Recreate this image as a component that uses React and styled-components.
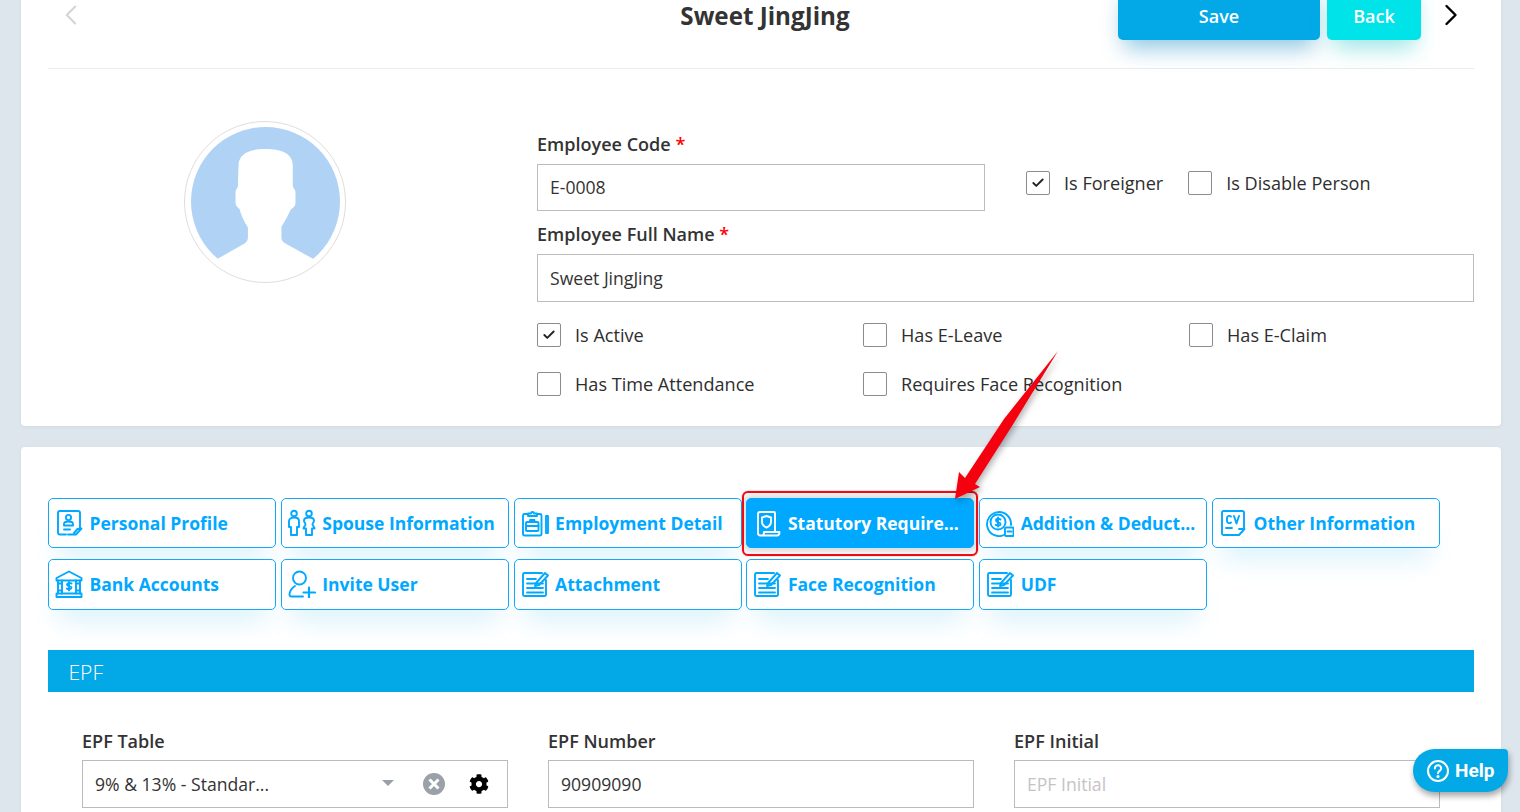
import React from "react";
import styled, { createGlobalStyle } from "styled-components";
import { Check, ChevronLeft, ChevronRight } from "lucide-react";
import { FaCog } from "react-icons/fa";

const Global = createGlobalStyle`
  html, body { margin: 0; padding: 0; height: 812px; overflow: hidden; background: #dde5ed; }
  body { font-family: "Open Sans", "Liberation Sans", sans-serif; color: #333; }
  * { box-sizing: border-box; }
`;

const Page = styled.div`
  width: 1520px;
  height: 812px;
  overflow: hidden;
  position: relative;
`;
const Content = styled.div`
  margin-top: -20px;
  padding: 0 19px 0 21px;
  display: flex;
  flex-direction: column;
  gap: 21px;
`;
const Card = styled.section`
  background: #fff;
  border-radius: 4px;
  box-shadow: 0 1px 3px rgba(120, 140, 160, 0.12);
  padding: 0 27px;
`;
const TopCard = styled(Card)`
  height: 446px;
`;
const Header = styled.header`
  display: flex;
  align-items: flex-start;
  height: 88.5px;
  border-bottom: 1px solid #ececec;
`;
const HeaderLeft = styled.div`
  width: 364px;
  padding: 18px 0 0 6px;
  color: #d2d4d6;
  display: flex;
`;
const Title = styled.h1`
  flex: 0 0 706px;
  margin: 0;
  padding-top: 18px;
  text-align: center;
  font-size: 24.2px;
  line-height: 36px;
  font-weight: 700;
  color: #333;
`;
const ActionBtn = styled.button`
  height: 60px;
  width: ${(p) => p.$w}px;
  margin-right: ${(p) => p.$mr}px;
  padding: 11px 0 0;
  border: 0;
  border-radius: 5px;
  background: ${(p) => p.$bg};
  color: #fff;
  font: 600 18px/30px "Open Sans", sans-serif;
  box-shadow: 0 14px 22px -6px ${(p) => p.$sh};
`;
const NextBtn = styled.div`
  padding: 17px 0 0 12px;
  color: #000;
  display: flex;
`;
const Profile = styled.div`
  display: flex;
  padding-top: 52px;
`;
const AvatarCol = styled.div`
  flex: 0 0 489px;
  padding-left: 136px;
`;
const AvatarFrame = styled.div`
  width: 162px;
  height: 162px;
  border: 1px solid #dedede;
  border-radius: 50%;
  display: flex;
  align-items: center;
  justify-content: center;
`;
const FormCol = styled.div`
  flex: 1;
  display: flex;
  flex-direction: column;
  padding-top: 9px;
`;
const Label = styled.label`
  display: block;
  font-size: 18.05px;
  line-height: 28px;
  font-weight: 600;
  color: #333;
  margin-bottom: 6px;
`;
const Req = styled.span`
  color: #f00;
`;
const Input = styled.div`
  height: ${(p) => p.$h || 47}px;
  width: ${(p) => (p.$w ? `${p.$w}px` : "100%")};
  border: 1px solid #bcbcbc;
  background: #fff;
  padding: 0 12px;
  display: flex;
  align-items: center;
  font-size: 17.6px;
  color: ${(p) => (p.$placeholder ? "#c4c4c4" : "#333")};
`;
const CodeRow = styled.div`
  display: flex;
  align-items: flex-start;
  margin-bottom: 9px;
`;
const InlineChecks = styled.div`
  display: flex;
  gap: 25px;
  margin: 7px 0 0 41px;
`;
const CheckItem = styled.div`
  display: flex;
  align-items: center;
  gap: 14px;
  font-size: 18.1px;
  line-height: 24px;
  color: #2e2e2e;
  white-space: nowrap;
`;
const Box = styled.span`
  flex: none;
  width: 24px;
  height: 24px;
  border: 1px solid #8c8c8c;
  border-radius: 2px;
  display: flex;
  align-items: center;
  justify-content: center;
  color: #222;
`;
const CheckGrid = styled.div`
  display: grid;
  grid-template-columns: 326px 326px 1fr;
  row-gap: 25px;
  margin-top: 21px;
`;

const BottomCard = styled(Card)`
  padding-top: 51px;
  height: 420px;
`;
const Tabs = styled.div`
  display: grid;
  grid-template-columns: repeat(6, 228px);
  column-gap: 4.8px;
  grid-template-rows: 50px 51px;
  row-gap: 11px;
`;
const Tab = styled.div`
  position: relative;
  display: flex;
  align-items: center;
  gap: 6.5px;
  padding: 0 10px 1px 6px;
  border: 1px solid ${(p) => (p.$active ? "#00a8ff" : "#17a8f5")};
  border-radius: 5px;
  background: ${(p) => (p.$active ? "#00a8ff" : "#fff")};
  color: ${(p) => (p.$active ? "#fff" : "#00a8ff")};
  font-size: 17.5px;
  font-weight: 700;
  box-shadow: ${(p) =>
    p.$active ? "0 0 5px 4px rgba(0,0,0,.13)" : "0 22px 26px -10px rgba(0,168,240,.14)"};
`;
const TabLabel = styled.span`
  overflow: hidden;
  white-space: nowrap;
  text-overflow: ellipsis;
`;
const Highlight = styled.span`
  position: absolute;
  inset: -8px -5px -9px -5px;
  border: 2px solid #ee0b14;
  border-radius: 6px;
  box-shadow: 0 0 1px #ee0b14;
  pointer-events: none;
`;
const IconSvg = styled.svg`
  flex: none;
  width: 28px;
  height: 28px;
  fill: none;
  stroke: currentColor;
  stroke-width: 1.9;
  stroke-linecap: round;
  stroke-linejoin: round;
`;
const Band = styled.div`
  margin-top: 40px;
  height: 42px;
  background: #03a9e7;
  color: #fff;
  padding-left: 20.5px;
  font-size: 21px;
  font-weight: 300;
  line-height: 44px;
`;
const Fields = styled.div`
  display: grid;
  grid-template-columns: repeat(3, 426px);
  column-gap: 40px;
  padding: 35px 0 0 34px;
`;
const FieldLabel = styled(Label)`
  margin-bottom: 5px;
`;
const SelectValue = styled.span`
  flex: 1;
`;
const Caret = styled.span`
  width: 0;
  height: 0;
  border-left: 6px solid transparent;
  border-right: 6px solid transparent;
  border-top: 6px solid #9aa0a6;
  margin-right: 29px;
  margin-top: -3px;
`;
const ClearBtn = styled.svg`
  width: 22px;
  height: 22px;
  margin-right: 24px;
`;
const Gear = styled(FaCog)`
  width: 20px;
  height: 20px;
  color: #000;
  margin-right: 6px;
`;
const Help = styled.div`
  position: absolute;
  left: 1413px;
  top: 749px;
  width: 95px;
  height: 43px;
  border-radius: 22px 4px 22px 22px;
  background: #03a9e7;
  color: #fff;
  display: flex;
  align-items: center;
  gap: 5px;
  padding-left: 13px;
  font: 700 19px "Roboto", sans-serif;
  box-shadow: 1px 4px 6px rgba(0, 0, 0, 0.35);
`;
const Arrow = styled.svg`
  position: absolute;
  left: 940px;
  top: 340px;
  width: 130px;
  height: 170px;
  pointer-events: none;
  filter: drop-shadow(2px 3px 3px rgba(0, 0, 0, 0.3));
`;

const I = {
  profile: (
    <>
      <path d="M11 25.500H5a2 2 0 0 1-2-2V4a2 2 0 0 1 2-2h18a2 2 0 0 1 2 2v16" />
      <circle cx="13.500" cy="8.500" r="2.600" />
      <path d="M9 16.500V15c0-1.500 1.500-2.500 4.500-2.500s4.500 1 4.500 2.500v1.500z" />
      <path d="M9 20.500h6M13 25.500h8l5.500-6-4 .5-3.500 4" />
    </>
  ),
  spouse: (
    <>
      <circle cx="6" cy="4.500" r="2.800" />
      <circle cx="21" cy="4.500" r="2.800" />
      <path d="M1 12c0-2 2-3.500 5-3.500s5 1.500 5 3.500v6H9v8H3v-8H1z" />
      <path d="M16 11.500c0-2 2-3 5-3s5 1 5 3c0 2-1.500 2.500-1.500 4s2 2 2 4h-2.500v6.500h-6V19.500h-2.500c0-2 2-2.500 2-4s-1.500-2-1.500-4z" />
    </>
  ),
  employ: (
    <>
      <path d="M6 5H3.500a1.500 1.500 0 0 0-1.500 1.500V25a1.500 1.500 0 0 0 1.500 1.500H19a1.500 1.500 0 0 0 1.500-1.500V6.500A1.500 1.500 0 0 0 19 5h-2.500" />
      <path d="M7 7V4.500h3a1.500 1.500 0 0 1 3 0h3V7z" />
      <rect x="5" y="13" width="12.500" height="9" rx="1" />
      <path d="M9 13v-2h4.500v2M5 17h12.500" />
      <path d="M25 7h2v17h-2z" />
    </>
  ),
  statutory: (
    <>
      <path d="M5 24V5a2 2 0 0 1 2-2h14a1 1 0 0 1 1 1v18" />
      <path d="M13.500 7l4.500 1.500v4c0 3-2 5-4.500 6-2.500-1-4.500-3-4.500-6v-4z" />
      <path d="M5 24c0 1.500 1 2.500 2.500 2.500H24c1.500 0 2.500-1 2.500-3.500H11c0 2-.5 3.500-2 3.500" />
    </>
  ),
  addition: (
    <>
      <circle cx="12" cy="13" r="7.500" />
      <path d="M18 26a12 12 0 1 1 7-10" />
      <path d="M14.500 10.500c-1-1-4.500-1.200-4.500 1 0 2.500 4.500 1.200 4.500 3.500 0 2-3.500 2-4.800.8M12 8.500v9" />
      <rect x="19" y="18.500" width="8.500" height="8.500" rx="1" />
      <path d="M21.500 22.500h4" />
    </>
  ),
  cv: (
    <>
      <path d="M13 26H4.500A1.500 1.500 0 0 1 3 24.500v-21A1.500 1.500 0 0 1 4.500 2h19A1.500 1.500 0 0 1 25 3.500V20" />
      <path d="M12 7.500c-1-1-4-1-4 1.500v3c0 2.500 3 2.500 4 1.500M15 7l2.500 7.500L20 7" />
      <path d="M7 19h6M13 26h7l5.500-6H20" />
    </>
  ),
  bank: (
    <>
      <path d="M14 1.500L1.500 8v2.500h25V8z" />
      <path d="M3 10.500v13M7 10.500v13M21 10.500v13M25 10.500v13M3 13.500h4M21 13.500h4M3 20.500h4M21 20.500h4" />
      <path d="M1.500 27v-3.500h25V27z" />
      <path d="M16.500 13.500c-1-1-4.500-1-4.500 1 0 2.200 4.500 1 4.500 3 0 2-3.500 2-4.700 1M14 12v8.500" />
    </>
  ),
  invite: (
    <>
      <circle cx="11.500" cy="8" r="6.500" />
      <path d="M15 26.500H3.500c-1.500 0-2.200-1-2-2.500.5-3.500 3-6.500 5.500-8" />
      <path d="M21 17.500V27.500M15.500 22.500H27" strokeWidth="2.200" />
    </>
  ),
  form: (
    <>
      <path d="M25 10v14.500a1.500 1.500 0 0 1-1.500 1.500h-20A1.500 1.500 0 0 1 2 24.500v-20A1.500 1.500 0 0 1 3.500 3H21" />
      <path d="M6 9h9M6 13.500h16M6 18h16M6 22.500h16" strokeWidth="1.800" />
      <path d="M15 13l9-10 3 2.500-9 9.500-4 1z" />
    </>
  ),
};

const tabs = [
  ["profile", "Personal Profile"],
  ["spouse", "Spouse Information"],
  ["employ", "Employment Detail"],
  ["statutory", "Statutory Requirements", true],
  ["addition", "Addition & Deductions"],
  ["cv", "Other Information"],
  ["bank", "Bank Accounts"],
  ["invite", "Invite User"],
  ["form", "Attachment"],
  ["form", "Face Recognition"],
  ["form", "UDF"],
];

const Checkbox = ({ on, children }) => (
  <CheckItem>
    <Box>{on && <Check size={14} strokeWidth={3.2} />}</Box>
    {children}
  </CheckItem>
);

export default function App() {
  return (
    <Page>
      <Global />
      <Content>
        <TopCard>
          <Header>
            <HeaderLeft>
              <ChevronLeft size={34} strokeWidth={1.4} />
            </HeaderLeft>
            <Title>Sweet JingJing</Title>
            <ActionBtn $w={202} $mr={7} $bg="#03a9e7" $sh="rgba(3,130,190,.45)">
              Save
            </ActionBtn>
            <ActionBtn $w={94} $mr={0} $bg="#00e3e8" $sh="rgba(0,190,190,.4)">
              Back
            </ActionBtn>
            <NextBtn>
              <ChevronRight size={36} strokeWidth={1.6} />
            </NextBtn>
          </Header>
          <Profile>
            <AvatarCol>
              <AvatarFrame>
                <svg width="149" height="149" viewBox="63 52 445 445">
                  <circle cx="285.500" cy="274.500" r="222.500" fill="#b0d3f5" />
                  <path
                    fill="#fff"
                    d="M285 118c-50 0-80 15-80 50l-2 62-7 14v35c0 8 8 14 12 18 4 18 14 38 25 55v30c0 8-4 13-10 18l-83 47 70 50h160l60-50-85-47c-8-5-12-10-12-18v-32c10-15 20-35 29-53 8-4 13-10 13-18v-35l-8-14v-62c0-35-30-50-82-50z"
                  />
                </svg>
              </AvatarFrame>
            </AvatarCol>
            <FormCol>
              <Label>
                Employee Code <Req>*</Req>
              </Label>
              <CodeRow>
                <Input $w={448}>E-0008</Input>
                <InlineChecks>
                  <Checkbox on>Is Foreigner</Checkbox>
                  <Checkbox>Is Disable Person</Checkbox>
                </InlineChecks>
              </CodeRow>
              <Label>
                Employee Full Name <Req>*</Req>
              </Label>
              <Input $h={48}>Sweet JingJing</Input>
              <CheckGrid>
                <Checkbox on>Is Active</Checkbox>
                <Checkbox>Has E-Leave</Checkbox>
                <Checkbox>Has E-Claim</Checkbox>
                <Checkbox>Has Time Attendance</Checkbox>
                <Checkbox>Requires Face Recognition</Checkbox>
              </CheckGrid>
            </FormCol>
          </Profile>
        </TopCard>
        <BottomCard>
          <Tabs>
            {tabs.map(([icon, label, active], i) => (
              <Tab key={i} $active={active}>
                <IconSvg viewBox="0 0 28 28">{I[icon]}</IconSvg>
                <TabLabel>{label}</TabLabel>
                {active && <Highlight />}
              </Tab>
            ))}
          </Tabs>
          <Band>EPF</Band>
          <Fields>
            <div>
              <FieldLabel>EPF Table</FieldLabel>
              <Input $h={48}>
                <SelectValue>9% &amp; 13% - Standar...</SelectValue>
                <Caret />
                <ClearBtn viewBox="0 0 22 22">
                  <circle cx="11" cy="11" r="11" fill="#9aa1a9" />
                  <path d="M6.500 6.500l9 9M15.500 6.500l-9 9" stroke="#fff" strokeWidth="3" />
                </ClearBtn>
                <Gear />
              </Input>
            </div>
            <div>
              <FieldLabel>EPF Number</FieldLabel>
              <Input $h={48}>90909090</Input>
            </div>
            <div>
              <FieldLabel>EPF Initial</FieldLabel>
              <Input $h={48} $placeholder>
                EPF Initial
              </Input>
            </div>
          </Fields>
        </BottomCard>
      </Content>
      <Arrow viewBox="940 340 130 170">
        <polygon
          fill="#f5000f"
          points="1058,351 1012,426 975,484 980,487 955,499 959,472 965,478 1004,419"
        />
      </Arrow>
      <Help>
        <svg width="24" height="24" viewBox="0 0 24 24" fill="none" stroke="#fff" strokeWidth="2" strokeLinecap="round">
          <circle cx="12" cy="12" r="10" />
          <path d="M8.800 9.500A3.200 3.200 0 0 1 15.200 9.500c0 2.200-3.200 2.500-3.200 4.700" />
          <circle cx="12" cy="17.500" r=".6" fill="#fff" />
        </svg>
        Help
      </Help>
    </Page>
  );
}
